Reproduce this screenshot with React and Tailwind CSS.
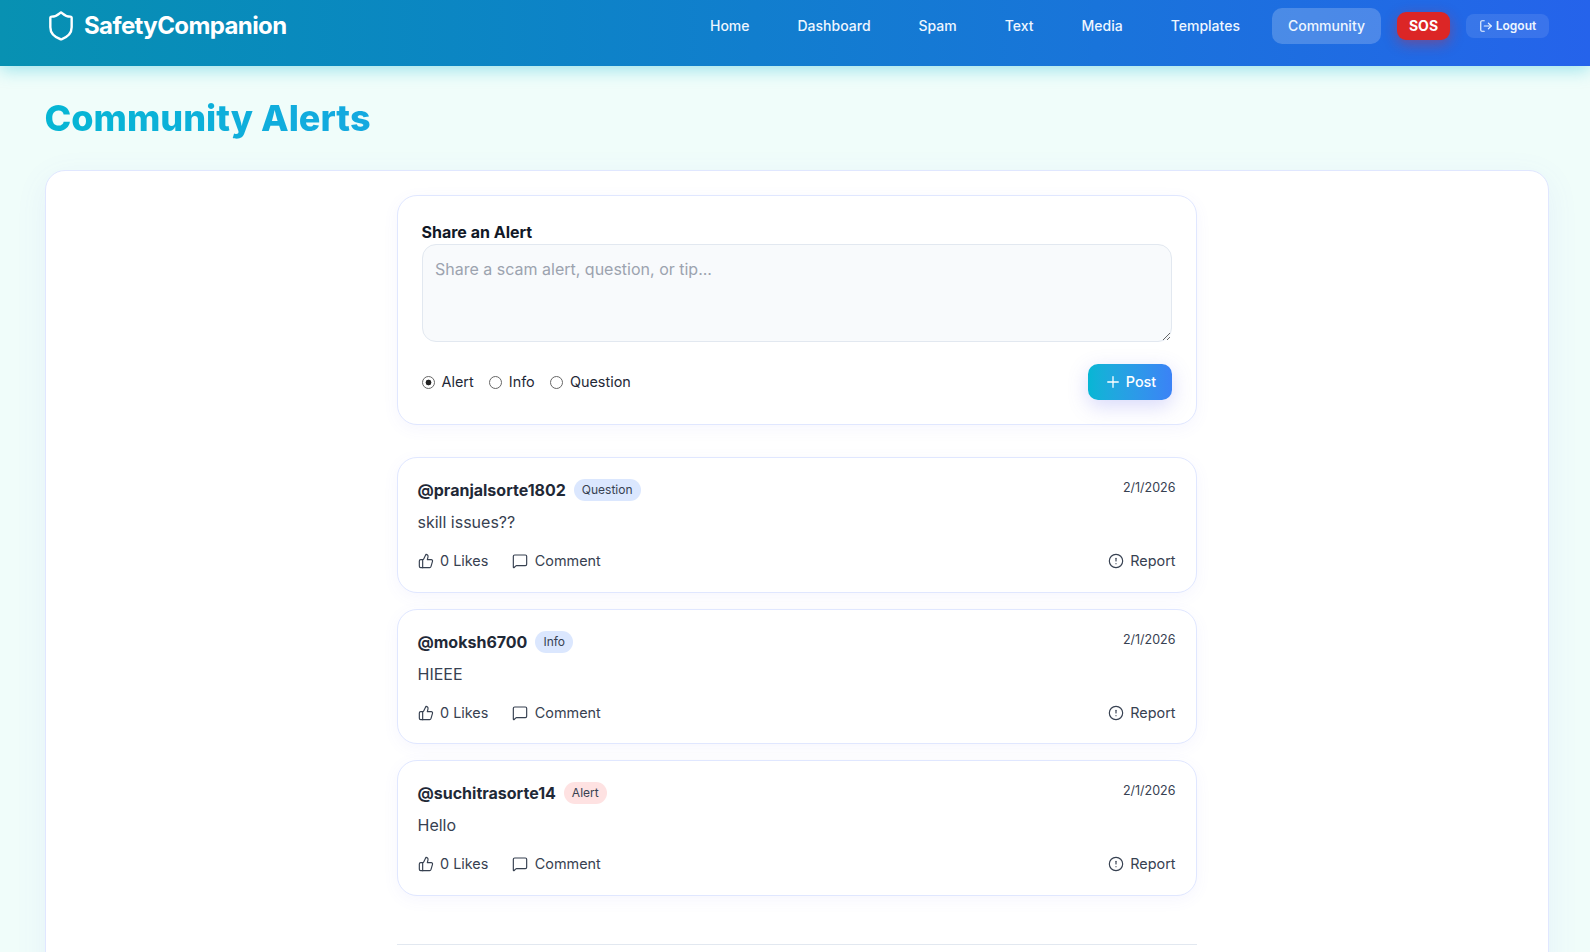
import React from "react";
import { Shield, LogOut, Plus, ThumbsUp, MessageSquare, CircleAlert } from "lucide-react";

const links = ["Home", "Dashboard", "Spam", "Text", "Media", "Templates", "Community"];
const date = "2/1/2026";
const posts = [
  { user: "@pranjalsorte1802", tag: "Question", tagClass: "bg-[#dbe7fe]", body: "skill issues??" },
  { user: "@moksh6700", tag: "Info", tagClass: "bg-[#dbe7fe]", body: "HIEEE" },
  { user: "@suchitrasorte14", tag: "Alert", tagClass: "bg-[#fee2e2]", body: "Hello" },
];

function Radio({ label, checked }) {
  return (
    <label className="flex items-center gap-[6.5px] text-[14.4px] leading-[20px] text-[#1f2937]">
      <input
        type="radio"
        name="kind"
        defaultChecked={checked}
        className="m-0 w-[13px] h-[13px] appearance-none rounded-full border border-[#666666] bg-white checked:bg-[radial-gradient(circle,#222222_0,#222222_2.6px,#ffffff_3.2px)]"
      />
      <span>{label}</span>
    </label>
  );
}

function Post({ user, tag, tagClass, body }) {
  return (
    <div className="h-[135.5px] rounded-[20px] border border-[#e0e7ff] bg-white pl-[19.5px] pr-[20.5px] pt-[20px] shadow-[0_4px_16px_rgba(99,102,241,0.06)]">
      <div className="flex items-start justify-between">
        <div className="flex items-center gap-[8px]">
          <span className="text-[16px] leading-[24px] font-bold text-[#1f2937]">{user}</span>
          <span className={`rounded-full px-[8px] h-[22px] flex items-center text-[12px] text-[#374151] ${tagClass}`}>{tag}</span>
        </div>
        <span className="text-[12.5px] leading-[18px] text-[#374151] mt-[1px]">{date}</span>
      </div>
      <p className="mt-[7px] text-[16px] leading-[26px] text-[#374151]">{body}</p>
      <div className="mt-[16px] flex items-center justify-between text-[14.4px] leading-[20px] text-[#374151]">
        <div className="flex items-center gap-[24px]">
          <span className="flex items-center gap-[6.5px]"><ThumbsUp size={16} strokeWidth={1.75} />0 Likes</span>
          <span className="flex items-center gap-[6.5px]"><MessageSquare size={16} strokeWidth={1.75} />Comment</span>
        </div>
        <span className="flex items-center gap-[6.5px]"><CircleAlert size={16} strokeWidth={1.75} />Report</span>
      </div>
    </div>
  );
}

export default function App() {
  return (
    <div className="h-screen overflow-hidden bg-[#f0fdfa] font-['Inter',sans-serif]">
      <header className="relative z-10 h-[66px] flex items-start justify-between pt-[8px] pl-[45px] pr-[41px] bg-gradient-to-r from-[#0891b2] to-[#2563eb] shadow-[0_4px_16px_rgba(6,182,212,0.35)]">
        <div className="flex h-[36px] items-center gap-[7px]">
          <Shield size={32} strokeWidth={1.8} className="text-white" />
          <span className="text-[24px] leading-[32px] font-bold tracking-[-0.6px] text-white">SafetyCompanion</span>
        </div>
        <nav className="flex items-center gap-[16px]">
          {links.map((l) => (
            <a key={l} className={`h-[36px] flex items-center px-[16px] pb-[1px] rounded-[10px] text-[14px] font-[550] text-[#eef6ff] ${l === "Community" ? "bg-white/20" : ""}`}>{l}</a>
          ))}
          <button className="h-[28px] w-[53px] pb-[1px] rounded-[9px] bg-[#dc2626] text-white text-[14px] font-bold shadow-[0_4px_14px_rgba(220,38,38,0.4)]">SOS</button>
          <button className="h-[24px] w-[83px] rounded-[8px] bg-white/10 flex items-center justify-center gap-[3px] text-[12px] font-semibold text-[#eef6ff]"><LogOut size={14} />Logout</button>
        </nav>
      </header>
      <main className="pl-[45px] pr-[41px]">
        <h1 className="-ml-[0.5px] mt-[30px] text-[36px] leading-[45px] font-extrabold w-fit text-transparent bg-clip-text bg-gradient-to-r from-[#06b6d4] to-[#14a9e0]">Community Alerts</h1>
        <section className="mt-[29px] rounded-[20px] border border-[#e0e7ff] bg-white pt-[24px] h-[900px] shadow-[0_8px_32px_rgba(99,102,241,0.08)]">
          <div className="w-[800px] mx-auto">
            <div className="h-[230px] rounded-[20px] border border-[#e0e7ff] bg-white px-[24px] pt-[24px] shadow-[0_4px_16px_rgba(99,102,241,0.06)]">
              <h2 className="-ml-[0.5px] text-[16px] leading-[24px] font-bold text-[#111827]">Share an Alert</h2>
              <textarea placeholder="Share a scam alert, question, or tip..." className="block w-full h-[98px] rounded-[14px] border border-[#e2e8f0] bg-[#f8fafc] px-[12px] py-[12px] text-[16px] leading-[24px] placeholder:text-[#9ca3af] outline-none" />
              <div className="mt-[22px] flex items-center justify-between">
                <div className="flex items-center gap-[15.7px]">
                  <Radio label="Alert" checked />
                  <Radio label="Info" />
                  <Radio label="Question" />
                </div>
                <button className="h-[36px] w-[84px] rounded-[10px] flex items-center justify-center gap-[4px] bg-gradient-to-r from-[#06b6d4] to-[#3b82f6] text-[14.4px] font-medium text-white shadow-[0_6px_20px_rgba(99,102,241,0.25)]"><Plus size={18} strokeWidth={1.75} />Post</button>
              </div>
            </div>
            <div className="mt-[32px] flex flex-col gap-[16px]">
              {posts.map((p) => <Post key={p.user} {...p} />)}
            </div>
            <div className="mt-[48.5px] border-t border-[#e2e8f0]" />
          </div>
        </section>
      </main>
    </div>
  );
}
